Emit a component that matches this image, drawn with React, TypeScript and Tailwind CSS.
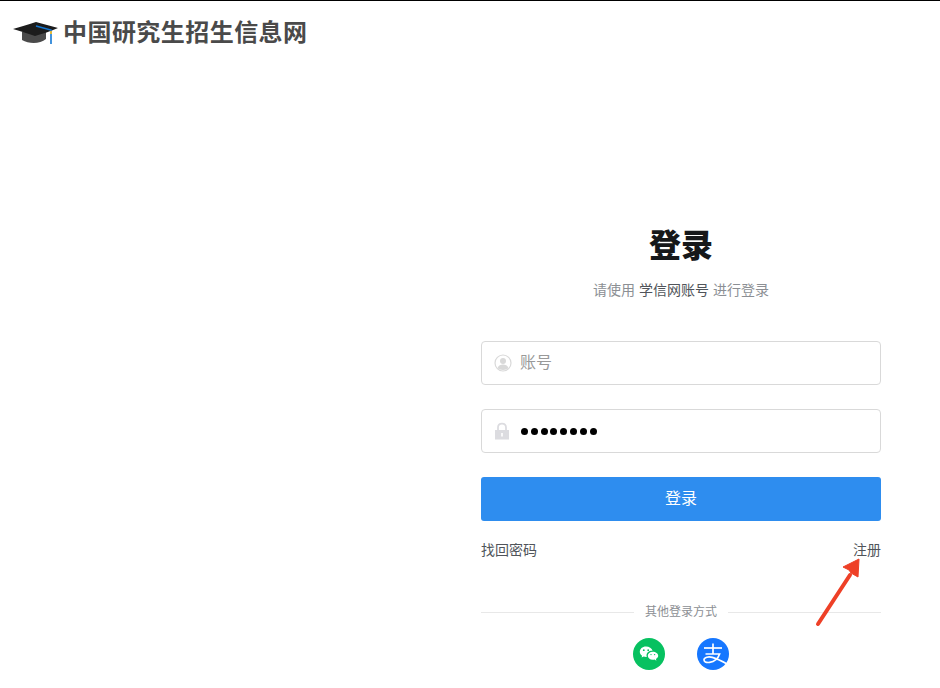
const cjk = '[font-family:"Liberation_Sans","Noto_Sans_CJK_SC",sans-serif]'

function GradCap() {
  return (
    <svg width="46" height="26" viewBox="0 0 46 26" className="shrink-0">
      <path d="M9 12 L9 20 C16 24 27 24 33 19 L33 12 Z" fill="#4a4a4a" />
      <path d="M0 9 C8 7 16 4 23 2 C30 4 38 6 45 8 C38 11 29 14 22 16 C15 14 8 11 0 9 Z" fill="#1c1c1c" />
      <path d="M23 6 L38 10 L38 24" fill="none" stroke="#1478d4" strokeWidth="1.6" />
      <rect x="37" y="11" width="2" height="3" fill="#e0b83c" />
    </svg>
  )
}

function UserIcon() {
  return (
    <svg width="18" height="18" viewBox="0 0 18 18" className="shrink-0">
      <circle cx="9" cy="9" r="8" fill="none" stroke="#d9d9d9" strokeWidth="1.2" />
      <circle cx="9" cy="7" r="3" fill="#d9d9d9" />
      <path d="M3.6 14 C4.5 11.2 6.6 10.4 9 10.4 C11.4 10.4 13.5 11.2 14.4 14 C12.8 16.6 5.2 16.6 3.6 14 Z" fill="#d9d9d9" />
    </svg>
  )
}

function LockIcon() {
  return (
    <svg width="16" height="18" viewBox="0 0 16 18" className="shrink-0">
      <path d="M4 8 V5.5 C4 3 5.8 1.6 8 1.6 C10.2 1.6 12 3 12 5.5 V8" fill="none" stroke="#dcdce0" strokeWidth="1.8" />
      <rect x="1" y="8" width="14" height="9.5" fill="#dcdce0" />
      <rect x="7.2" y="11" width="1.6" height="3.5" fill="#ffffff" />
    </svg>
  )
}

function WechatIcon() {
  return (
    <svg width="32" height="32" viewBox="0 0 32 32">
      <circle cx="16" cy="16" r="16" fill="#07c160" />
      <path d="M13 8.5 C9.2 8.5 6.8 11 6.8 13.8 C6.8 15.4 7.7 16.8 9.1 17.7 L8.6 19.6 L10.7 18.5 C11.5 18.8 12.3 18.9 13.1 18.9 C13.3 18.9 13.6 18.9 13.8 18.9 C13.6 18.4 13.5 17.9 13.5 17.4 C13.5 14.9 15.9 12.8 19 12.8 L19.6 12.8 C18.8 10.3 16.2 8.5 13 8.5 Z" fill="#ffffff" />
      <path d="M19.8 13.8 C16.9 13.8 14.8 15.6 14.8 17.8 C14.8 20 16.9 21.8 19.8 21.8 C20.4 21.8 21 21.7 21.5 21.6 L23.4 22.7 L22.9 21 C24.3 20.2 25.2 19.1 25.2 17.8 C25.2 15.6 22.8 13.8 19.8 13.8 Z" fill="#ffffff" />
      <circle cx="10.8" cy="12.2" r="0.9" fill="#07c160" />
      <circle cx="15.2" cy="12.2" r="0.9" fill="#07c160" />
      <circle cx="18" cy="16.6" r="0.7" fill="#07c160" />
      <circle cx="21.6" cy="16.6" r="0.7" fill="#07c160" />
    </svg>
  )
}

function AlipayIcon() {
  return (
    <svg width="32" height="32" viewBox="0 0 32 32">
      <circle cx="16" cy="16" r="16" fill="#1677ff" />
      <g fill="none" stroke="#ffffff" strokeWidth="1.7">
        <path d="M7 10 H25" />
        <path d="M16 5.6 V16" />
        <path d="M8.5 16 H22.6 C21 20.6 17.6 23.8 12.6 24.4 C8.8 24.8 6.8 23.6 7 21.6 C7.3 19.2 11.6 18.4 15.4 19.4 C20 20.6 25 23.2 31 26.4" />
      </g>
    </svg>
  )
}

export default function App() {
  return (
    <div className={`relative h-[688px] w-[940px] overflow-hidden border-t border-black bg-white ${cjk}`}>
      <header className="flex items-center gap-1 pl-[13px] pt-[19px]">
        <GradCap />
        <span className="text-[24px] leading-[26px] font-bold tracking-[0.45px] text-[#4a4a4a]">中国研究生招生信息网</span>
      </header>

      <main className="ml-[481px] mt-[178px] flex w-[400px] flex-col">
        <h1 className="text-center text-[32px] leading-[44px] font-black text-[#16181a]">登录</h1>
        <p className="mt-3 text-center text-sm leading-5 text-[#8c8f94]">
          请使用 <span className="text-[#50545a]">学信网账号</span> 进行登录
        </p>

        <div className="mt-[41px] flex h-11 items-center gap-2 rounded border border-[#d9d9d9] pl-3">
          <UserIcon />
          <span className="text-base text-[#999999]">账号</span>
        </div>

        <div className="mt-[24px] flex h-11 items-center gap-[11px] rounded border border-[#d9d9d9] pl-3">
          <LockIcon />
          <span className="flex gap-[2.8px]">
            {[0, 1, 2, 3, 4, 5, 6, 7].map((i) => (
              <span key={i} className="size-[7px] rounded-full bg-black" />
            ))}
          </span>
        </div>

        <button type="button" className="mt-[24px] h-11 rounded-[3px] bg-[#2e8def] text-base text-white">
          登录
        </button>

        <div className="mt-[19px] flex justify-between text-sm leading-[20px] text-[#50545a]">
          <span>找回密码</span>
          <span>注册</span>
        </div>

        <div className="mt-[44px] flex items-center gap-[11px]">
          <div className="h-px flex-1 bg-[#e8e8e8]" />
          <span className="text-xs leading-4 text-[#8c8f94]">其他登录方式</span>
          <div className="h-px flex-1 bg-[#e8e8e8]" />
        </div>

        <div className="mt-[18px] flex justify-center gap-8">
          <WechatIcon />
          <AlipayIcon />
        </div>
      </main>

      {/* annotation arrow on top of the page */}
      <svg width="60" height="80" viewBox="0 0 60 80" className="absolute left-[810px] top-[554px]">
        <path d="M8 69 L40 20" stroke="#ee4027" strokeWidth="4" strokeLinecap="round" fill="none" />
        <path d="M49 4 L33 12 L39 15 L41 18 L48 22 Z" fill="#ee4027" stroke="#ee4027" strokeWidth="1" strokeLinejoin="round" />
      </svg>
    </div>
  )
}
